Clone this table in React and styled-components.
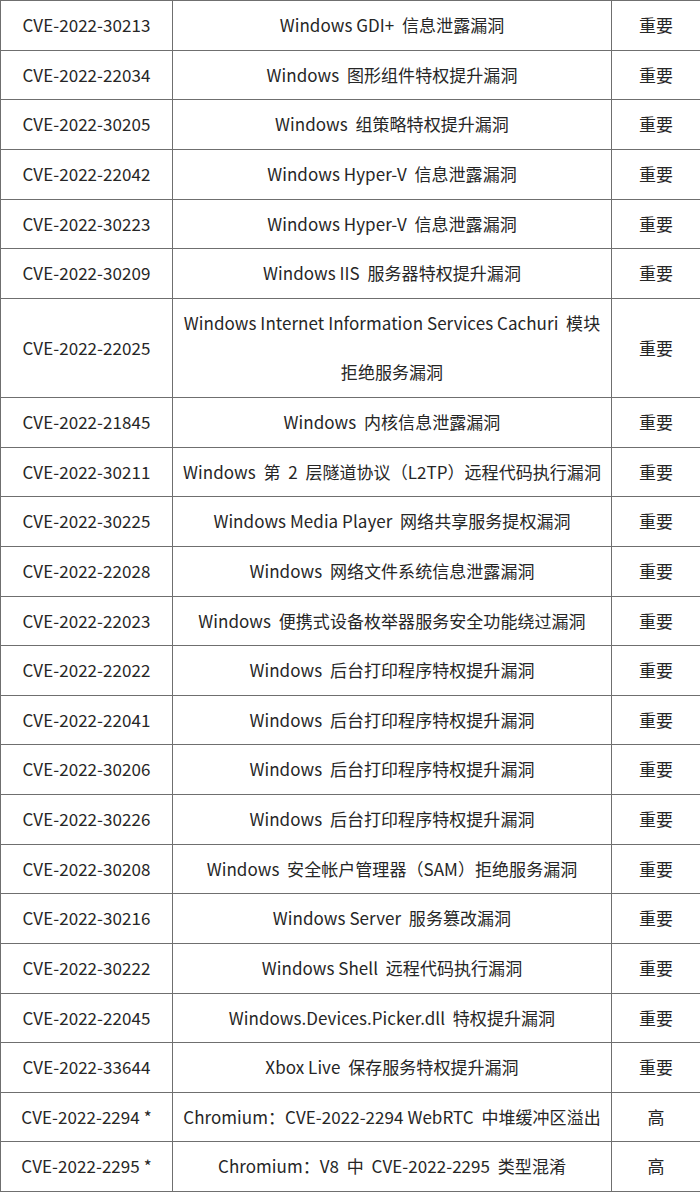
import React from "react";
import styled, { createGlobalStyle } from "styled-components";

const Global = createGlobalStyle`
  html, body { margin: 0; padding: 0; background: #fff; }
  body { font-family: "Noto Sans CJK SC", "Noto Sans", sans-serif; }
`;

const Table = styled.table`
  width: 700px;
  border-collapse: collapse;
  table-layout: fixed;
  color: #262626;
  font-size: 17px;
`;

const Col = styled.col`
  width: ${(p) => p.$w}px;
`;

const Cell = styled.td`
  border: 1px solid #6f6f6f;
  padding: ${(p) => (p.$tall ? "0.5px 0" : "0")};
  height: 48.625px;
  line-height: 48.625px;
  text-align: center;
  vertical-align: middle;
  white-space: pre;
  letter-spacing: 0.05px;
`;

const rows = [
  ["CVE-2022-30213", "Windows GDI+  信息泄露漏洞", "重要"],
  ["CVE-2022-22034", "Windows  图形组件特权提升漏洞", "重要"],
  ["CVE-2022-30205", "Windows  组策略特权提升漏洞", "重要"],
  ["CVE-2022-22042", "Windows Hyper-V  信息泄露漏洞", "重要"],
  ["CVE-2022-30223", "Windows Hyper-V  信息泄露漏洞", "重要"],
  ["CVE-2022-30209", "Windows IIS  服务器特权提升漏洞", "重要"],
  ["CVE-2022-22025", ["Windows Internet Information Services Cachuri  模块", "拒绝服务漏洞"], "重要"],
  ["CVE-2022-21845", "Windows  内核信息泄露漏洞", "重要"],
  ["CVE-2022-30211", "Windows  第  2  层隧道协议（L2TP）远程代码执行漏洞", "重要"],
  ["CVE-2022-30225", "Windows Media Player  网络共享服务提权漏洞", "重要"],
  ["CVE-2022-22028", "Windows  网络文件系统信息泄露漏洞", "重要"],
  ["CVE-2022-22023", "Windows  便携式设备枚举器服务安全功能绕过漏洞", "重要"],
  ["CVE-2022-22022", "Windows  后台打印程序特权提升漏洞", "重要"],
  ["CVE-2022-22041", "Windows  后台打印程序特权提升漏洞", "重要"],
  ["CVE-2022-30206", "Windows  后台打印程序特权提升漏洞", "重要"],
  ["CVE-2022-30226", "Windows  后台打印程序特权提升漏洞", "重要"],
  ["CVE-2022-30208", "Windows  安全帐户管理器（SAM）拒绝服务漏洞", "重要"],
  ["CVE-2022-30216", "Windows Server  服务篡改漏洞", "重要"],
  ["CVE-2022-30222", "Windows Shell  远程代码执行漏洞", "重要"],
  ["CVE-2022-22045", "Windows.Devices.Picker.dll  特权提升漏洞", "重要"],
  ["CVE-2022-33644", "Xbox Live  保存服务特权提升漏洞", "重要"],
  ["CVE-2022-2294 *", "Chromium：CVE-2022-2294 WebRTC  中堆缓冲区溢出", "高"],
  ["CVE-2022-2295 *", "Chromium：V8  中  CVE-2022-2295  类型混淆", "高"],
];

export default function App() {
  return (
    <>
      <Global />
      <Table>
        <colgroup>
          <Col $w={172} />
          <Col $w={439} />
          <Col $w={89} />
        </colgroup>
        <tbody>
          {rows.map(([id, desc, level]) => {
            const tall = Array.isArray(desc);
            return (
              <tr key={id}>
                <Cell $tall={tall}>{id}</Cell>
                <Cell $tall={tall}>
                  {tall
                    ? desc.map((d, i) => (
                        <React.Fragment key={i}>
                          {i > 0 && <br />}
                          {d}
                        </React.Fragment>
                      ))
                    : desc}
                </Cell>
                <Cell $tall={tall}>{level}</Cell>
              </tr>
            );
          })}
        </tbody>
      </Table>
    </>
  );
}
